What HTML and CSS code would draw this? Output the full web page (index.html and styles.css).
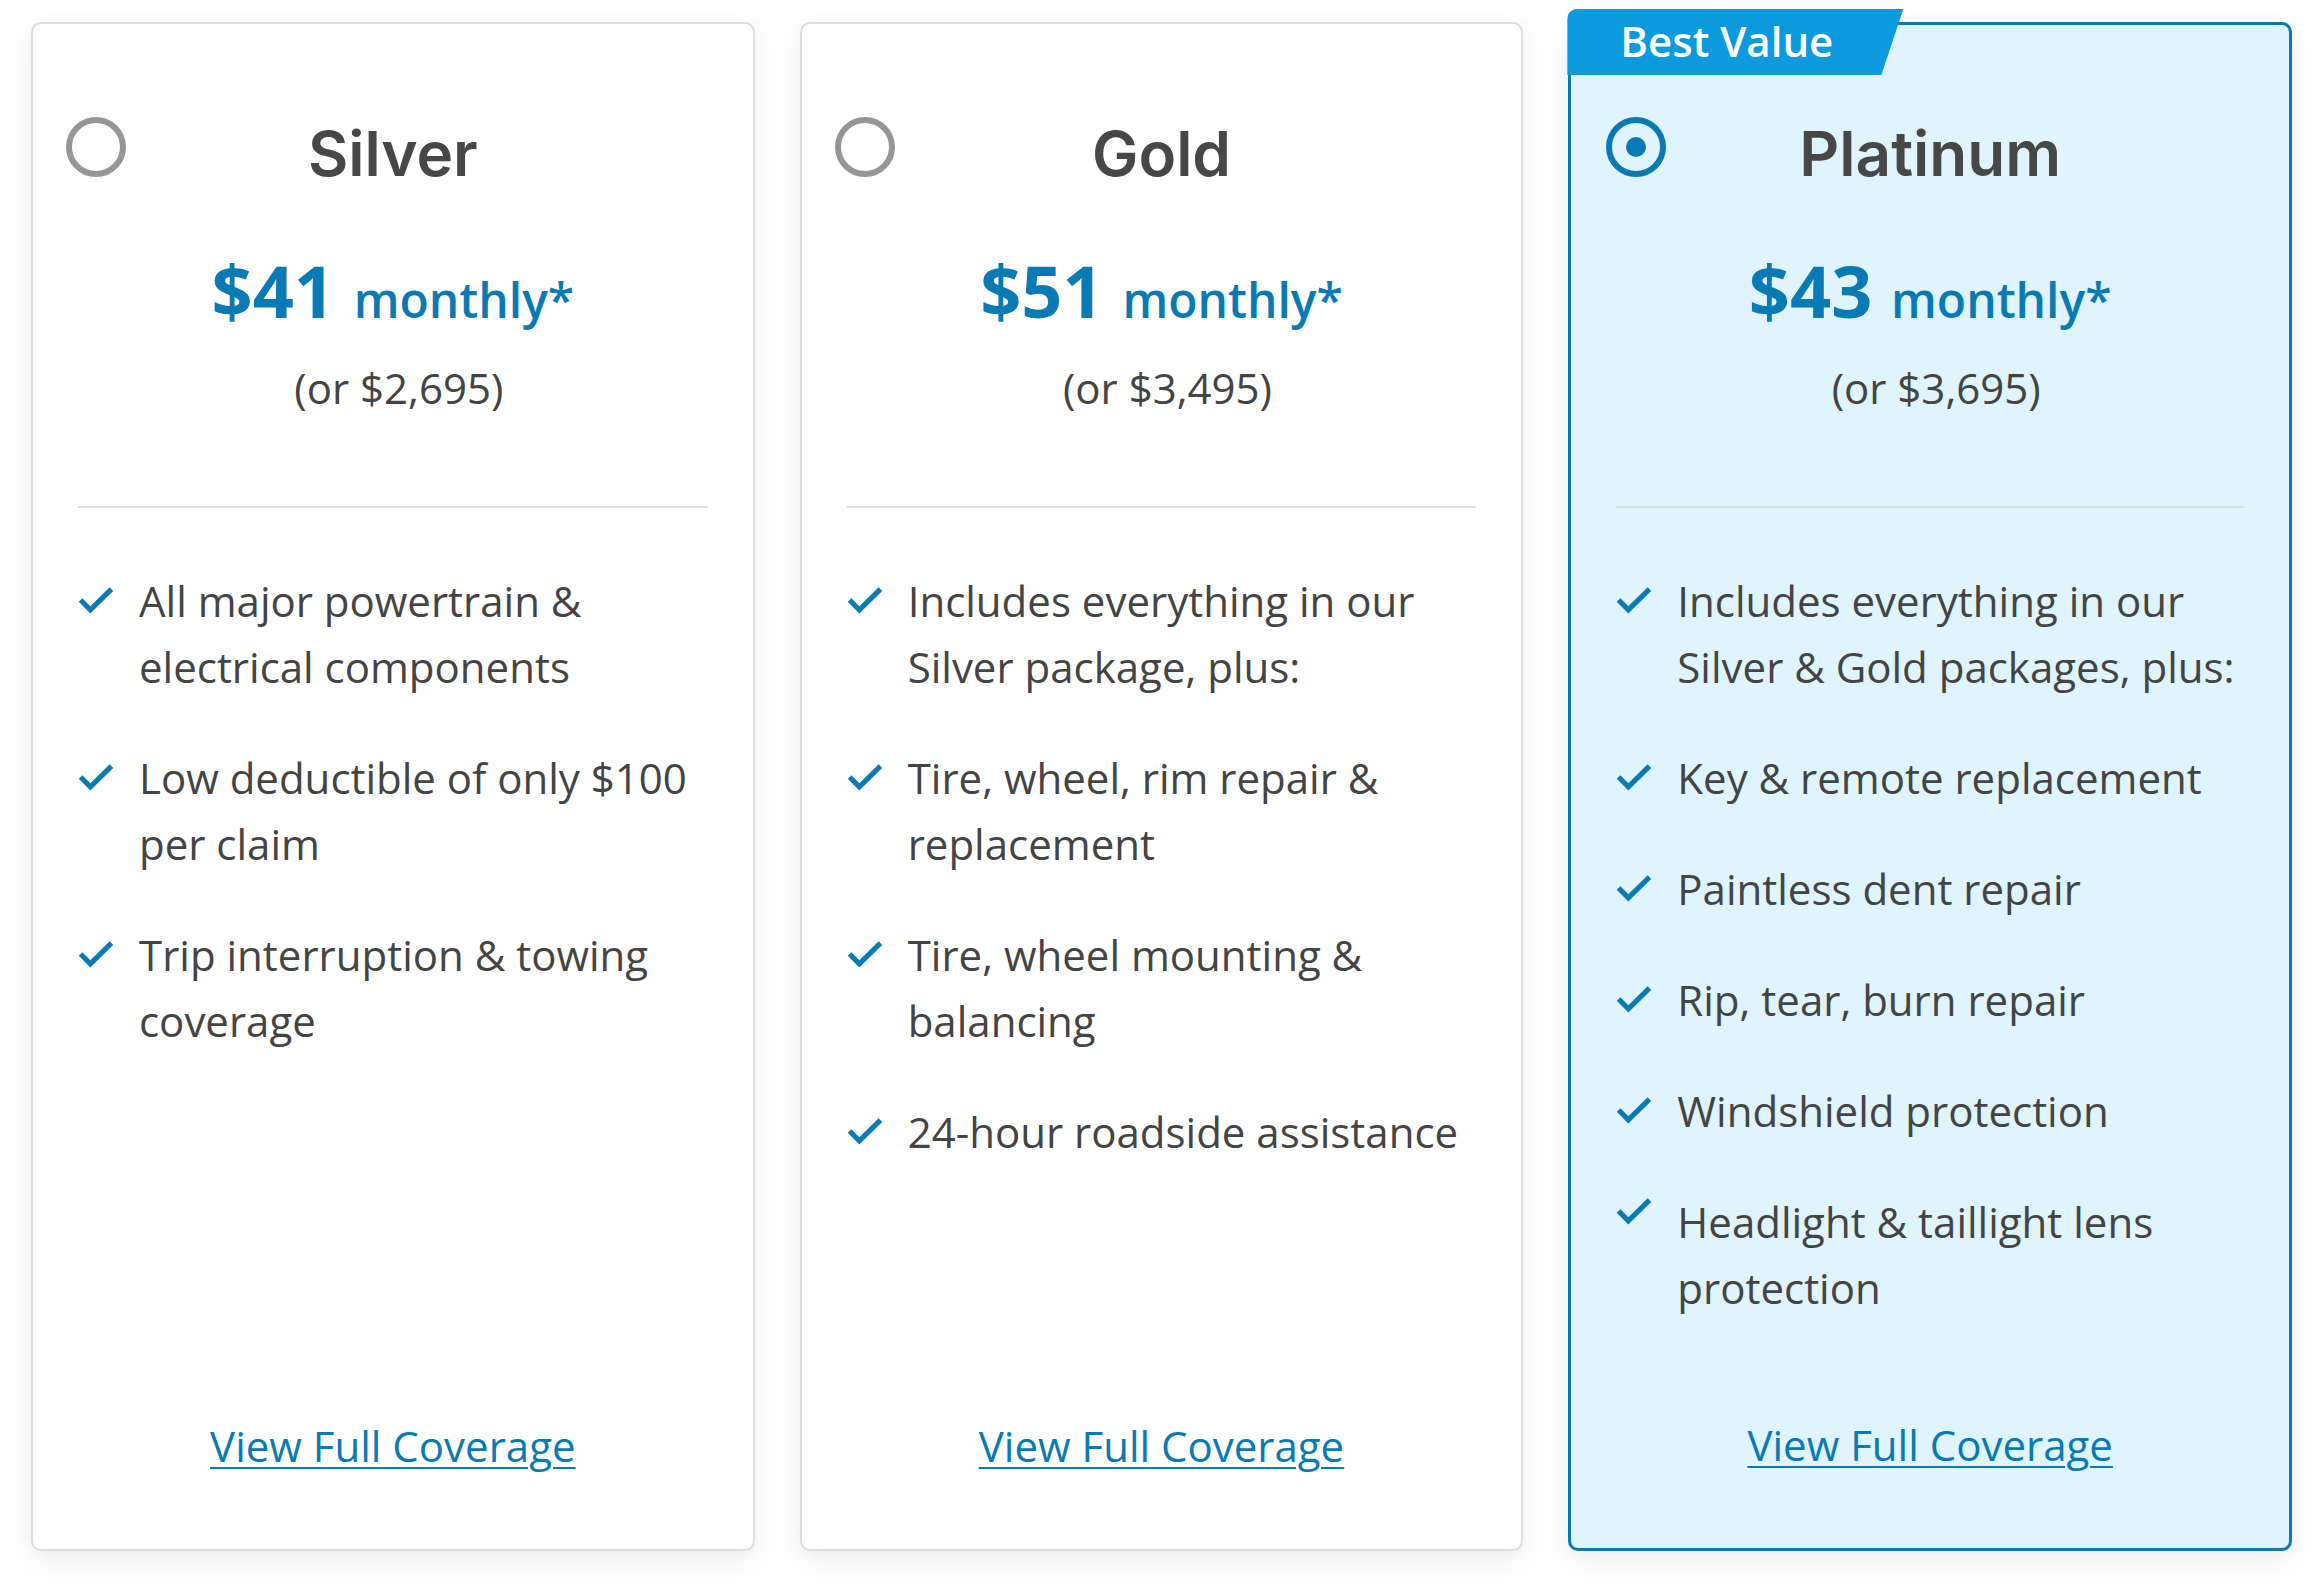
FILE: index.html
```html
<!DOCTYPE html>
<html lang="en">
<head>
<meta charset="utf-8">
<title>Protection Plans</title>
<link rel="stylesheet" href="styles.css">
</head>
<body>
<main class="plans">
  <article class="plan">
    <header class="plan-head">
      <span class="radio" role="radio" aria-checked="false"></span>
      <h2 class="plan-name">Silver</h2>
    </header>
    <div class="plan-price"><span class="amount">$41</span> <span class="period">monthly*</span></div>
    <p class="plan-total">(or $2,695)</p>
    <hr class="plan-divider">
    <ul class="features">
      <li class="feature"><svg class="check" viewBox="0 0 35 27" aria-hidden="true"><polyline points="2.5,13.5 12,23 32.5,3"/></svg><span>All major powertrain &amp; electrical components</span></li>
      <li class="feature"><svg class="check" viewBox="0 0 35 27" aria-hidden="true"><polyline points="2.5,13.5 12,23 32.5,3"/></svg><span>Low deductible of only $100 per claim</span></li>
      <li class="feature"><svg class="check" viewBox="0 0 35 27" aria-hidden="true"><polyline points="2.5,13.5 12,23 32.5,3"/></svg><span>Trip interruption &amp; towing coverage</span></li>
    </ul>
    <a class="coverage-link" href="#">View Full Coverage</a>
  </article>

  <article class="plan">
    <header class="plan-head">
      <span class="radio" role="radio" aria-checked="false"></span>
      <h2 class="plan-name">Gold</h2>
    </header>
    <div class="plan-price"><span class="amount">$51</span> <span class="period">monthly*</span></div>
    <p class="plan-total">(or $3,495)</p>
    <hr class="plan-divider">
    <ul class="features">
      <li class="feature"><svg class="check" viewBox="0 0 35 27" aria-hidden="true"><polyline points="2.5,13.5 12,23 32.5,3"/></svg><span>Includes everything in our Silver package, plus:</span></li>
      <li class="feature"><svg class="check" viewBox="0 0 35 27" aria-hidden="true"><polyline points="2.5,13.5 12,23 32.5,3"/></svg><span>Tire, wheel, rim repair &amp; replacement</span></li>
      <li class="feature"><svg class="check" viewBox="0 0 35 27" aria-hidden="true"><polyline points="2.5,13.5 12,23 32.5,3"/></svg><span>Tire, wheel mounting &amp; balancing</span></li>
      <li class="feature"><svg class="check" viewBox="0 0 35 27" aria-hidden="true"><polyline points="2.5,13.5 12,23 32.5,3"/></svg><span>24-hour roadside assistance</span></li>
    </ul>
    <a class="coverage-link" href="#">View Full Coverage</a>
  </article>

  <article class="plan plan--featured">
    <div class="badge">Best Value</div>
    <header class="plan-head">
      <span class="radio radio--checked" role="radio" aria-checked="true"><span class="radio-dot"></span></span>
      <h2 class="plan-name">Platinum</h2>
    </header>
    <div class="plan-price"><span class="amount">$43</span> <span class="period">monthly*</span></div>
    <p class="plan-total">(or $3,695)</p>
    <hr class="plan-divider">
    <ul class="features">
      <li class="feature"><svg class="check" viewBox="0 0 35 27" aria-hidden="true"><polyline points="2.5,13.5 12,23 32.5,3"/></svg><span>Includes everything in our Silver &amp; Gold packages, plus:</span></li>
      <li class="feature"><svg class="check" viewBox="0 0 35 27" aria-hidden="true"><polyline points="2.5,13.5 12,23 32.5,3"/></svg><span>Key &amp; remote replacement</span></li>
      <li class="feature"><svg class="check" viewBox="0 0 35 27" aria-hidden="true"><polyline points="2.5,13.5 12,23 32.5,3"/></svg><span>Paintless dent repair</span></li>
      <li class="feature"><svg class="check" viewBox="0 0 35 27" aria-hidden="true"><polyline points="2.5,13.5 12,23 32.5,3"/></svg><span>Rip, tear, burn repair</span></li>
      <li class="feature"><svg class="check" viewBox="0 0 35 27" aria-hidden="true"><polyline points="2.5,13.5 12,23 32.5,3"/></svg><span>Windshield protection</span></li>
      <li class="feature feature--raised"><svg class="check" viewBox="0 0 35 27" aria-hidden="true"><polyline points="2.5,13.5 12,23 32.5,3"/></svg><span>Headlight &amp; taillight lens protection</span></li>
    </ul>
    <a class="coverage-link" href="#">View Full Coverage</a>
  </article>
</main>
</body>
</html>
```

FILE: styles.css
```css
* {
  box-sizing: border-box;
}

html, body {
  margin: 0;
  padding: 0;
  background: #ffffff;
}

body {
  font-family: "Open Sans", "Noto Sans", Arial, sans-serif;
  color: #444444;
}

.plans {
  display: grid;
  grid-template-columns: repeat(3, 1fr);
  column-gap: 45px;
  padding: 22px 30px 40px 31px;
  align-items: stretch;
}

.plan {
  position: relative;
  display: flex;
  flex-direction: column;
  background: #ffffff;
  border: 2px solid #dddddd;
  border-radius: 10px;
  box-shadow: 0 12px 30px rgba(0, 0, 0, 0.06), 0 0 14px rgba(0, 0, 0, 0.03);
  padding: 0 0 70px;
}

.plan--featured {
  background: #dff4fd;
  border: 3px solid #0a7ab5;
}

.badge {
  position: absolute;
  top: -16px;
  left: -4px;
  width: 336px;
  height: 66px;
  padding-left: 53px;
  background: #0b9ade;
  color: #ffffff;
  font-size: 42px;
  font-weight: 600;
  line-height: 64px;
  border-top-left-radius: 10px;
  clip-path: polygon(0 0, 100% 0, calc(100% - 22px) 100%, 0 100%);
}

.plan-head {
  display: grid;
  grid-template-columns: 1fr auto 1fr;
  align-items: start;
  padding: 93px 33px 0;
}

.plan--featured .plan-head {
  padding-top: 92px;
  padding-left: 35px;
  padding-right: 35px;
}

.radio {
  justify-self: start;
  width: 60px;
  height: 60px;
  border: 6px solid #969696;
  border-radius: 50%;
  display: flex;
  align-items: center;
  justify-content: center;
}

.radio--checked {
  border-color: #0a7ab5;
}

.radio-dot {
  width: 20px;
  height: 20px;
  border-radius: 50%;
  background: #0a7ab5;
}

.plan-name {
  margin: 0;
  font-family: Inter, "Open Sans", sans-serif;
  font-weight: 600;
  font-size: 62px;
  line-height: 1.2;
  color: #474747;
  text-align: center;
}

.plan-price {
  margin-top: 57px;
  text-align: center;
  color: #0a7ab5;
  font-size: 72px;
  line-height: 84px;
  height: 84px;
}

.amount {
  font-size: 72px;
  font-weight: 700;
}

.period {
  font-size: 48px;
  font-weight: 600;
  line-height: 1;
}

.plan-total {
  margin: 23px 0 0;
  padding-left: 12px;
  font-size: 42px;
  line-height: 66px;
  text-align: center;
  color: #444444;
}

.plan-divider {
  margin: 85px 45px 0;
  border: 0;
  height: 2px;
  background: #dfdfdf;
}

.features {
  list-style: none;
  margin: 60px 0 91px;
  padding: 0 45px;
}

.feature {
  display: flex;
  align-items: flex-start;
  gap: 25px;
  font-size: 42px;
  line-height: 66px;
  color: #444444;
}

.feature + .feature {
  margin-top: 45px;
}

.check {
  flex: none;
  width: 36px;
  height: 28px;
  margin-top: 18px;
  fill: none;
  stroke: #0a7ab5;
  stroke-width: 5;
  stroke-linejoin: miter;
  stroke-linecap: butt;
}

.feature--raised .check {
  margin-top: 8px;
}

.coverage-link {
  margin-top: auto;
  align-self: center;
  font-size: 42px;
  line-height: 66px;
  color: #0a7ab5;
  text-decoration: underline;
  text-decoration-thickness: 2px;
  text-underline-offset: 5px;
}
```
